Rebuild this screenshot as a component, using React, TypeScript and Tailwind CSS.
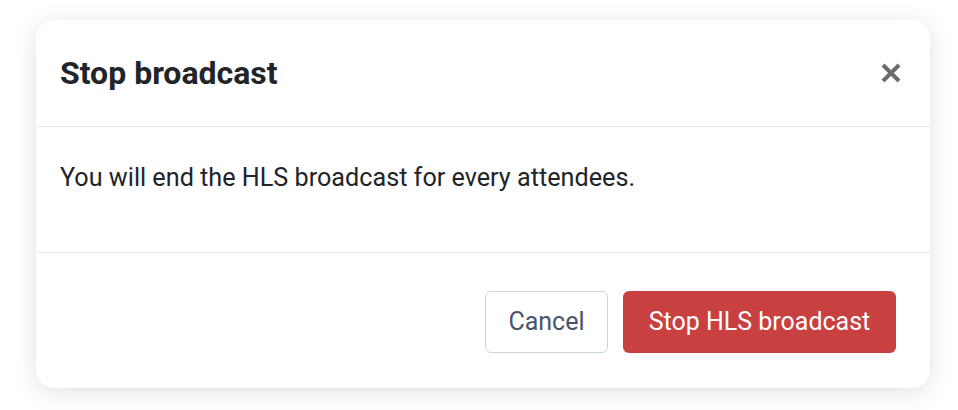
export default function App() {
  return (
    <div className="min-h-screen bg-white p-0" style={{ fontFamily: "Roboto, 'Liberation Sans', sans-serif" }}>
      <div className="pt-5 pl-9 w-[930px]">
        <div className="bg-white rounded-[18px] shadow-[0_4px_24px_rgba(0,0,0,0.12)] h-[368px] flex flex-col">
          <div className="h-[107px] flex items-center justify-between pl-6 pr-7 border-b border-[#e5e7eb]">
            <h1 className="text-[32px] font-bold text-[#212529]">Stop broadcast</h1>
            <button className="text-[#6b6b6b]">
              <svg width="22" height="22" viewBox="0 0 22 22" stroke="currentColor" strokeWidth="4" strokeLinecap="butt">
                <path d="M3 3 L19 19 M19 3 L3 19" />
              </svg>
            </button>
          </div>
          <div className="h-[126px] pl-6 pt-[32px] border-b border-[#e5e7eb]">
            <p className="text-[25.2px] text-[#212529]">You will end the HLS broadcast for every attendees.</p>
          </div>
          <div className="flex-1 flex items-start justify-end gap-[15px] pr-[34px] pt-[38px]">
            <button className="h-[62px] w-[123px] rounded-md border border-[#cbd5e1] text-[25px] text-[#475569]">Cancel</button>
            <button className="h-[62px] w-[273px] rounded-md bg-[#c94040] text-[25px] text-white">Stop HLS broadcast</button>
          </div>
        </div>
      </div>
    </div>
  );
}
